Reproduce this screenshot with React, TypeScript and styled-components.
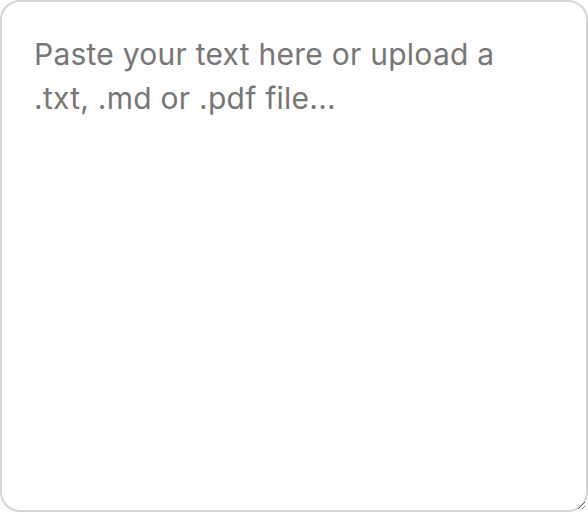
import React from "react";
import styled, { createGlobalStyle } from "styled-components";

const Global = createGlobalStyle`
  html, body {
    margin: 0;
    padding: 0;
    background: #ffffff;
  }
  #root {
    width: 588px;
    height: 512px;
  }
`;

const Field = styled.textarea`
  display: block;
  box-sizing: border-box;
  width: 588px;
  height: 512px;
  margin: 0;
  padding: 31px 48px 31px 32px;
  border: 2px solid #d6d6d6;
  border-radius: 20px;
  background: #ffffff;
  color: #1f1f1f;
  font-family: Inter, "Liberation Sans", Arial, sans-serif;
  font-size: 30px;
  letter-spacing: 0.25px;
  line-height: 43.5px;
  outline: none;
  resize: vertical;

  &::placeholder {
    color: #767676;
    opacity: 1;
  }
`;

export default function App() {
  return (
    <>
      <Global />
      <Field placeholder="Paste your text here or upload a .txt, .md or .pdf file..." />
    </>
  );
}
